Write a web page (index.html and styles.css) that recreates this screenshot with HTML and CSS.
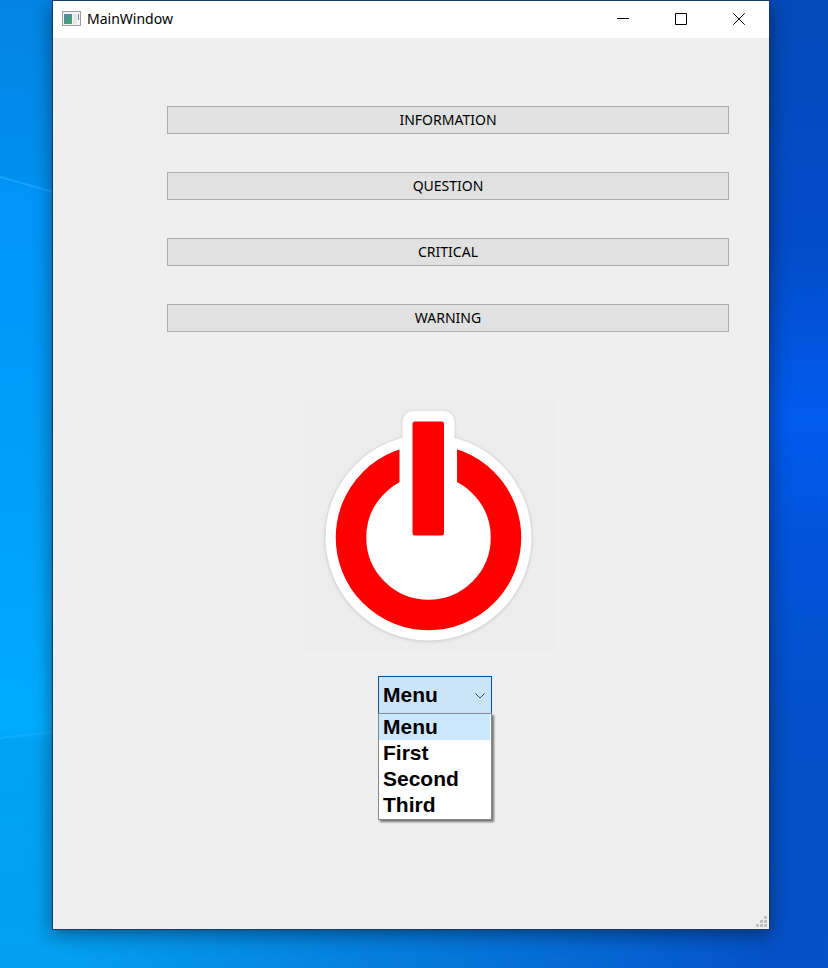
FILE: index.html
```html
<!DOCTYPE html>
<html lang="en">
<head>
<meta charset="utf-8">
<title>MainWindow</title>
<link rel="stylesheet" href="styles.css">
</head>
<body>
<div class="desktop">
  <svg class="wallpaper" viewBox="0 0 828 968" preserveAspectRatio="none" aria-hidden="true">
    <defs>
      <linearGradient id="base" x1="0" x2="1" y1="0" y2="0">
        <stop offset="0" stop-color="#049ff0"/><stop offset=".08" stop-color="#049ff0"/><stop offset=".4" stop-color="#0583e0"/><stop offset=".7" stop-color="#0569d4"/><stop offset=".92" stop-color="#0553c8"/><stop offset="1" stop-color="#054ac0"/>
      </linearGradient>
      <linearGradient id="left" x1="0" x2="0" y1="0" y2="1">
        <stop offset="0" stop-color="#0384e4"/><stop offset=".18" stop-color="#008fee"/><stop offset=".2" stop-color="#0095f8"/><stop offset=".5" stop-color="#009ff8"/><stop offset=".75" stop-color="#00acff"/><stop offset=".77" stop-color="#00a2f3"/><stop offset="1" stop-color="#049ff0"/>
      </linearGradient>
      <linearGradient id="right" x1="0" x2="0" y1="0" y2="1">
        <stop offset="0" stop-color="#044abb"/><stop offset=".25" stop-color="#034cc8"/><stop offset=".43" stop-color="#015bee"/><stop offset=".55" stop-color="#0254dc"/><stop offset=".75" stop-color="#0450c8"/><stop offset="1" stop-color="#0551c6"/>
      </linearGradient>
    </defs>
    <rect width="828" height="968" fill="url(#base)"/>
    <rect width="60" height="968" fill="url(#left)"/>
    <rect x="760" width="68" height="968" fill="url(#right)"/>
    <path d="M0 177L60 194" stroke="#15a4ff" stroke-width="2"/>
    <path d="M0 738L60 731" stroke="#10aeff" stroke-width="2"/>
  </svg>
  <main class="window">
    <header class="titlebar">
      <svg class="app-icon" viewBox="0 0 19 15" aria-hidden="true">
        <defs><linearGradient id="pane" x1="0" x2="1" y1="0" y2="1"><stop offset="0" stop-color="#4a86b4"/><stop offset="1" stop-color="#4aa862"/></linearGradient></defs>
        <rect x=".5" y=".5" width="18" height="14" fill="#f4f4f4" stroke="#9a9ea4"/>
        <rect x="2" y="3" width="8" height="10" fill="url(#pane)"/>
        <rect x="11" y="3" width="4" height="10" fill="#e6e6e6"/>
        <rect x="16" y="3" width="1" height="6" fill="#5a94a4"/>
      </svg>
      <h1 class="title">MainWindow</h1>
      <button class="caption" type="button" aria-label="Minimize"><svg viewBox="0 0 12 12"><path d="M0 5.5H12"/></svg></button>
      <button class="caption" type="button" aria-label="Maximize"><svg viewBox="0 0 12 12"><path d="M.5.5H11.5V11.5H.5Z"/></svg></button>
      <button class="caption" type="button" aria-label="Close"><svg viewBox="0 0 12 12"><path d="M.3.3L11.7 11.7M11.7.3L.3 11.7"/></svg></button>
    </header>
    <div class="content">
      <div class="actions">
        <button class="push" type="button">INFORMATION</button>
        <button class="push" type="button">QUESTION</button>
        <button class="push" type="button">CRITICAL</button>
        <button class="push" type="button">WARNING</button>
      </div>
      <div class="picture">
        <svg class="power" viewBox="0 0 250 252" role="img" aria-label="Power">
          <defs><filter id="soft" x="-10%" y="-10%" width="120%" height="120%"><feGaussianBlur stdDeviation="1.5"/></filter></defs>
          <rect width="250" height="252" fill="#ededed"/>
          <g fill="#cdd2d2" filter="url(#soft)">
            <circle cx="124.5" cy="137" r="104"/>
            <rect x="98" y="10" width="53" height="80" rx="11"/>
          </g>
          <g fill="#fff">
            <circle cx="124.5" cy="136.5" r="103"/>
            <rect x="98.5" y="10" width="52" height="80" rx="11"/>
          </g>
          <circle cx="124.5" cy="136.5" r="77.5" fill="none" stroke="#fe0000" stroke-width="30.5"/>
          <rect x="95.5" y="38" width="57.5" height="60" fill="#fff"/>
          <rect x="108.5" y="20.5" width="31.5" height="114" rx="2.5" fill="#fe0000"/>
        </svg>
      </div>
      <div class="chooser">
        <div class="combo">
          <select class="select" aria-label="Menu">
            <option>Menu</option><option>First</option><option>Second</option><option>Third</option>
          </select>
          <svg class="chevron" viewBox="0 0 10 6" aria-hidden="true"><path d="M.5.5L5 5L9.5.5"/></svg>
          <ul class="popup" role="listbox" aria-label="Menu options">
            <li class="item current" role="option" aria-selected="true">Menu</li>
            <li class="item" role="option">First</li>
            <li class="item" role="option">Second</li>
            <li class="item" role="option">Third</li>
          </ul>
        </div>
      </div>
    </div>
    <footer class="statusbar">
      <svg class="grip" viewBox="0 0 11 11" aria-hidden="true"><path d="M8 0h3v3h-3zM4 4h3v3h-3zM8 4h3v3h-3zM0 8h3v3h-3zM4 8h3v3h-3zM8 8h3v3h-3z"/></svg>
    </footer>
  </main>
</div>
</body>
</html>
```
FILE: styles.css
```css
* { box-sizing: border-box; }
body { margin: 0; font: 14px/20px "Noto Sans", "Open Sans", sans-serif; color: #000; }
.desktop { position: relative; display: flex; min-height: 100vh; padding: 0 58px 38px 52px; overflow: hidden; }
.wallpaper { position: absolute; inset: 0; width: 100%; height: 100%; }
.window { position: relative; flex: 1; display: flex; flex-direction: column; background: #efefef; border: 1px solid #153c66; box-shadow: 0 4px 18px rgba(0, 0, 0, .45); }
.titlebar { display: flex; align-items: center; height: 37px; padding: 0 1px 2px 9px; background: #fff; }
.app-icon { width: 19px; height: 15px; margin-right: 6px; }
.title { flex: 1; margin: 0; font-size: 14px; font-weight: 400; }
.caption { display: flex; align-items: center; justify-content: center; width: 58px; height: 35px; padding: 0; border: 0; background: none; }
.caption svg { width: 12px; height: 12px; fill: none; stroke: #000; stroke-width: 1; }
.content { flex: 1; padding: 68px 40px 0 114px; }
.actions { display: grid; gap: 38px; }
.push { height: 28px; padding: 0; border: 1px solid #adadad; background: #e1e1e1; font: inherit; color: #000; }
.picture { display: flex; justify-content: center; padding: 69px 39px 23px 0; }
.power { width: 250px; height: 252px; }
.chooser { display: flex; justify-content: center; padding-right: 26px; font: bold 21px/26px "Liberation Sans", Arial, sans-serif; }
.combo { position: relative; width: 114px; }
.select { display: block; width: 100%; height: 38px; padding: 0 4px; border: 1px solid #005499; border-radius: 0; background: #cce4f7; appearance: none; font: inherit; color: #000; }
.chevron { position: absolute; top: 17px; right: 7px; width: 10px; height: 6px; fill: none; stroke: #444; }
.popup { position: absolute; top: 37px; left: 0; width: 100%; margin: 0; padding: 0 1px 1px 0; list-style: none; background: #fff; border: 1px solid #828790; box-shadow: 2px 2px 2px rgba(0, 0, 0, .5); }
.item { padding-left: 4px; }
.current { background: #cce8ff; }
.statusbar { display: flex; justify-content: flex-end; padding: 0 2px 2px; }
.grip { width: 11px; height: 11px; fill: #bfbfbf; }
```
